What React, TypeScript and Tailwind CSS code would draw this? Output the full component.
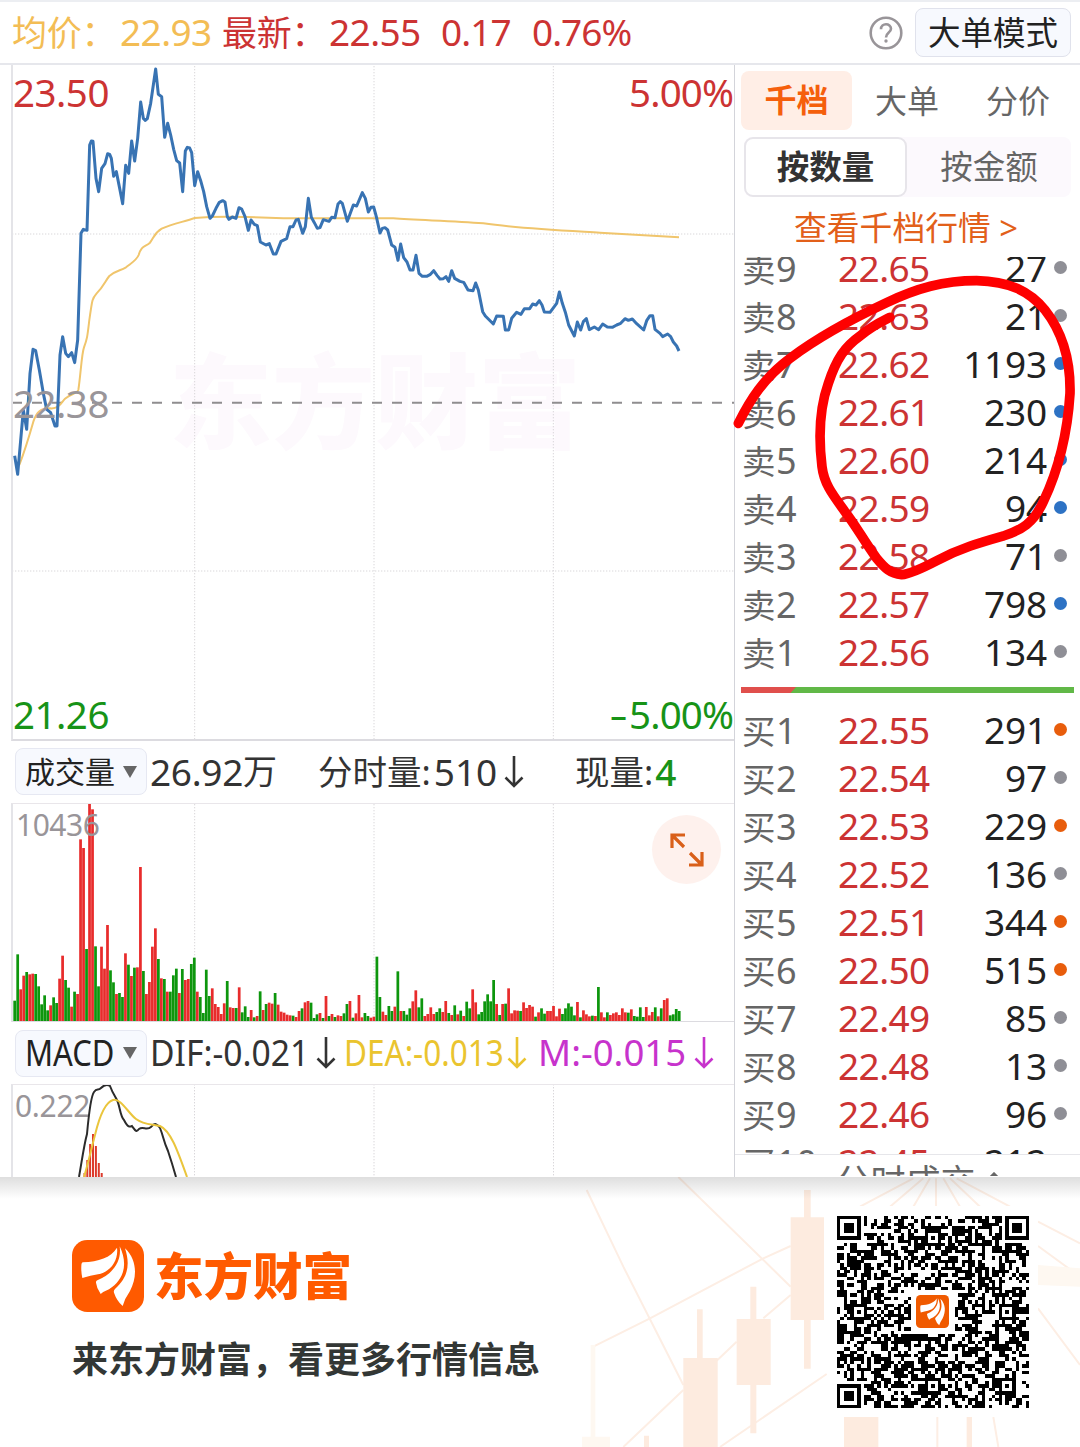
import * as React from "react"
import clsx from "clsx"

type Dot = "gray" | "blue" | "orange"
type Level = { label: string; price: string; qty: string; dot?: Dot }

const asks: Level[] = [
  { label: "卖9", price: "22.65", qty: "27", dot: "gray" },
  { label: "卖8", price: "22.63", qty: "21", dot: "gray" },
  { label: "卖7", price: "22.62", qty: "1193", dot: "blue" },
  { label: "卖6", price: "22.61", qty: "230", dot: "blue" },
  { label: "卖5", price: "22.60", qty: "214", dot: "blue" },
  { label: "卖4", price: "22.59", qty: "94", dot: "blue" },
  { label: "卖3", price: "22.58", qty: "71", dot: "gray" },
  { label: "卖2", price: "22.57", qty: "798", dot: "blue" },
  { label: "卖1", price: "22.56", qty: "134", dot: "gray" },
]

const bids: Level[] = [
  { label: "买1", price: "22.55", qty: "291", dot: "orange" },
  { label: "买2", price: "22.54", qty: "97", dot: "gray" },
  { label: "买3", price: "22.53", qty: "229", dot: "orange" },
  { label: "买4", price: "22.52", qty: "136", dot: "gray" },
  { label: "买5", price: "22.51", qty: "344", dot: "orange" },
  { label: "买6", price: "22.50", qty: "515", dot: "orange" },
  { label: "买7", price: "22.49", qty: "85", dot: "gray" },
  { label: "买8", price: "22.48", qty: "13", dot: "gray" },
  { label: "买9", price: "22.46", qty: "96", dot: "gray" },
  { label: "买10", price: "22.45", qty: "212" },
]

// One entry per minute: colour and height (a third of a pixel per unit)
const volume =
  "g61 g200 r95 r136 g147 r140 r142 g141 g104 g50 g77 g32 r47 g71 g54 r127 r196 g123 g100 r43 g88 r81 r545 r519 g216 r651 r635 g224 g104 r223 r157 r288 g152 g116 r81 g84 g72 r203 g169 r135 g160 r161 r462 g150 r81 r117 r223 r278 g186 r128 g126 r88 g88 g137 g157 r84 g156 r123 r126 g171 g190 r88 g72 g24 g154 g75 r98 r51 r42 r21 r53 g120 r41 r39 g39 r101 g26 g44 g12 r33 g11 r15 g89 r33 g51 r55 r52 g84 r49 r28 r25 r19 r17 g16 r12 r30 g38 r56 r60 g55 g9 g20 r24 g9 r75 g15 r21 g12 r17 r15 g23 g51 r60 g10 r23 r78 r11 g24 g15 r10 r13 " +
  "g193 g72 r28 r18 g45 g30 r43 g149 r30 g30 g19 g38 r59 r92 g41 g68 r15 r21 r41 r21 g27 g38 r27 r60 g24 r18 g47 r20 g31 r15 g58 g38 r95 r56 g20 g27 g59 g80 g59 g123 r51 g18 r51 g52 r98 r23 r32 r31 g30 r56 r39 r48 r43 g13 r26 g38 g22 r30 r30 r45 r14 r37 g21 g38 g53 g43 g17 r57 g11 r32 r20 r14 g16 r15 g102 r26 r11 g26 r18 r23 r26 r18 r38 r26 g25 r35 g15 g13 g41 g12 r42 r17 r27 g41 r14 g38 r63 r68 g17 g20 g36 g30"

const bars = volume.split(" ").map((v) => ({ up: v[0] === "r", h: Number(v.slice(1)) }))

const priceLine =
  "44,1187 53,1243 70,1050 80,1108 90,940 99,868 107,872 118,930 130,1000 140,1048 152,1058 165,1098 171,1098 180,885 188,830 197,880 205,890 215,878 224,908 233,840 243,520 250,508 261,511 269,255 274,243 279,244 288,355 296,395 305,325 315,311 323,281 329,283 334,295 341,349 349,335 359,385 368,431 377,316 386,340 395,243 404,303 413,235 422,126 430,175 436,181 442,176 452,130 467,27 475,103 485,110 494,232 503,190 512,225 521,268 530,302 539,309 548,395 556,273 562,262 569,264 575,278 584,377 593,335 602,362 611,395 620,440 630,475 637,468 648,445 658,427 668,422 675,426 682,470 687,478 697,471 708,475 717,443 725,447 735,470 745,511 753,480 763,493 772,497 781,546 798,555 808,551 820,582 828,582 843,544 860,536 870,500 879,500 888,480 895,478 908,520 916,500 925,415 934,472 943,488 952,505 960,503 970,479 987,484 995,472 1005,473 1014,432 1021,425 1027,430 1042,484 1060,435 1070,438 1087,398 1096,415 1105,456 1113,442 1121,441 " +
  "1129,470 1140,519 1147,505 1155,503 1163,510 1175,555 1185,562 1194,601 1202,552 1211,593 1221,606 1230,630 1239,630 1248,586 1257,640 1267,649 1280,649 1290,644 1301,632 1311,646 1320,657 1330,656 1338,650 1346,664 1355,632 1364,655 1380,664 1391,667 1404,690 1419,692 1427,669 1435,690 1448,755 1456,768 1480,792 1490,768 1510,769 1516,810 1526,810 1535,775 1550,757 1563,763 1573,746 1589,746 1598,732 1608,735 1618,722 1626,735 1633,756 1650,757 1670,730 1678,696 1687,730 1697,760 1706,795 1723,828 1732,786 1742,810 1750,785 1759,776 1768,809 1783,801 1796,809 1808,792 1822,801 1837,802 1850,795 1862,790 1875,776 1885,781 1897,777 1910,791 1931,810 1940,782 1950,767 1958,767 1965,808 1980,820 1988,830 2003,822 2012,830 2020,846 2030,858 2037,873"

const avgLine =
  "M58 1215C75 1170 90 1120 100 1085C110 1055 122 1045 150 1045C178 1048 185 1025 195 1016C215 1000 232 1000 235 990C242 945 245 880 252 862C262 835 262 830 268 780C277 715 277 715 290 700C312 678 315 664 328 648C350 630 360 633 378 622C400 605 410 600 416 585C425 555 435 562 450 548C465 525 465 518 485 506C520 490 555 485 584 474C650 468 700 470 740 471L850 475L1180 475C1250 481 1350 482 1450 490C1550 505 1700 512 1800 518L2037 532"

function pointsToPath(points: string) {
  return "M" + points.split(" ").join("L")
}

function BrandMark({ className, fill = "#ff5a00", radius = 46 }: { className?: string; fill?: string; radius?: number }) {
  return (
    <svg viewBox="0 0 216 216" className={className}>
      <rect width="216" height="216" rx={radius} fill={fill} />
      <g fill="#fff">
        <path d="M135 23C116 54 80 64 33 67Q28 68 28 78Q27 96 31 114Q56 106 78 103C116 96 140 60 135 23Z" />
        <path d="M143 19C150 68 118 104 76 121Q71 123 72 128Q74 145 86 162Q94 155 111 148C158 118 168 70 143 19Z" />
        <path d="M159 25C176 76 166 114 129 147Q124 152 126 158Q134 182 152 198Q158 176 174 153C196 112 196 60 159 25Z" />
      </g>
    </svg>
  )
}

const QR = 57

function buildQr() {
  const grid = Array.from({ length: QR }, () => new Array(QR).fill(false))
  let seed = 20931
  for (let y = 0; y < QR; y++) {
    for (let x = 0; x < QR; x++) {
      seed = (seed * 1103515245 + 12345) % 2147483648
      grid[y][x] = seed / 2147483648 < 0.52
    }
  }
  const ring = (cx: number, cy: number, r: number, isDark: (d: number) => boolean) => {
    for (let y = cy - r; y <= cy + r; y++) {
      for (let x = cx - r; x <= cx + r; x++) {
        if (x < 0 || y < 0 || x >= QR || y >= QR) continue
        grid[y][x] = isDark(Math.max(Math.abs(x - cx), Math.abs(y - cy)))
      }
    }
  }
  for (const [x, y] of [[28, 6], [6, 28], [50, 28], [28, 50], [50, 50]]) ring(x, y, 2, (d) => d !== 1)
  for (const [x, y] of [[3, 3], [53, 3], [3, 53]]) ring(x, y, 4, (d) => d < 2 || d === 3)
  // quiet zone for the logo
  ring(28, 28, 6, () => false)
  let d = ""
  grid.forEach((row, y) => row.forEach((on, x) => { if (on) d += `M${x} ${y}h1v1h-1z` }))
  return d
}

const qrPath = buildQr()

function QrCode() {
  return (
    <div className="relative flex h-[211px] w-[211px] items-center justify-center bg-white">
      <svg viewBox="0 0 57 57" className="h-48 w-48" shapeRendering="crispEdges">
        <path d={qrPath} fill="#000" />
      </svg>
      <BrandMark className="absolute top-[89px] left-[89px] h-[33px] w-[33px]" fill="#f05a00" radius={30} />
    </div>
  )
}

function TopBar() {
  return (
    <header className="flex h-[65px] shrink-0 items-center border-t-2 border-b-2 border-t-[#eceef2] border-b-[#e6e7ec] pr-[9px] pl-3 text-[37px] leading-[60px]">
      <div className="flex w-[210px] text-[#f3bd55]">
        <span className="w-[108px] text-[35px] tracking-[-0.2px]">均价：</span>
        <span className="-mt-px tracking-[-0.6px]">22.93</span>
      </div>
      <div className="flex text-[#cc3333]">
        <span className="w-[107px] text-[35px] tracking-[-0.2px]">最新：</span>
        <span className="-mt-px w-[112px] tracking-[-0.6px]">22.55</span>
        <span className="-mt-px w-[91px] tracking-[-0.9px]">0.17</span>
        <span className="-mt-px tracking-[-1px]">0.76%</span>
      </div>
      <div className="ml-auto flex items-center gap-3">
        <svg viewBox="0 0 34 34" className="h-[34px] w-[34px]" fill="none" stroke="#999599" strokeWidth="2.6">
          <circle cx="17" cy="17" r="15.3" />
          <path d="M12 13.2C12 6.6 22 6.8 22 12.8C22 16.6 17 16.4 17 21.4" />
          <circle cx="17" cy="25" r="1" fill="#999599" strokeWidth="1.4" />
        </svg>
        <button className="flex h-[49px] w-[156px] items-center justify-center rounded-lg border border-[#e0e2ec] bg-[#f7f9fe] text-[32.5px] text-[#222]">
          大单模式
        </button>
      </div>
    </header>
  )
}

function GridColumns({ height }: { height: number }) {
  return (
    <g stroke="#d9d7da" strokeWidth="3" strokeDasharray="4 5">
      <path d={`M584 0V${height}`} />
      <path d={`M1122 0V${height}`} />
      <path d={`M1660 0V${height}`} />
    </g>
  )
}

function PriceChart() {
  return (
    <div className="relative h-[676px] border-b-2 border-l-2 border-b-[#dcdbe0] border-l-[#e4e4e8] text-[38.5px] leading-[48px]">
      <div className="absolute top-[266px] left-[156px] text-[103px] leading-[140px] font-black text-[#fdf9fd]">东方财富</div>
      <svg viewBox="39 15 2163 2022" className="absolute inset-0 h-[674px] w-[721px]" fill="none">
        <GridColumns height={2040} />
        <path d="M36 522H2202M36 1533H2202" stroke="#d9d7da" strokeWidth="3" strokeDasharray="4 5" />
        <path d="M36 1028H2202" stroke="#8f8d8f" strokeWidth="6" strokeDasharray="30 30" />
        <path d={avgLine} stroke="#f0c56c" strokeWidth="6" />
        <path d={pointsToPath(priceLine)} stroke="#3873b3" strokeWidth="9" strokeLinejoin="round" />
      </svg>
      <span className="absolute top-[3px] left-0 tracking-[-0.5px] text-[#cc3333]">23.50</span>
      <span className="absolute top-[3px] right-[1px] tracking-[-0.9px] text-[#cc3333]">5.00%</span>
      <span className="absolute top-[314px] left-0 tracking-[-0.5px] text-[#999599]">22.38</span>
      <span className="absolute bottom-px left-0 tracking-[-0.5px] text-[#179317]">21.26</span>
      <span className="absolute right-[1px] bottom-px tracking-[-0.9px] text-[#179317]">
        <span className="mr-[3px] inline-block origin-right scale-x-[1.5]">-</span>5.00%
      </span>
    </div>
  )
}

function Down({ className }: { className?: string }) {
  return (
    <svg viewBox="0 0 20 34" className={clsx("h-[34px] w-5 shrink-0", className)} fill="none" stroke="currentColor" strokeWidth="2.6">
      <path d="M10 1V31M1.5 22.5L10 31L18.5 22.5" />
    </svg>
  )
}

function Picker({ children }: { children: React.ReactNode }) {
  return (
    <button className="ml-[4px] flex h-[47px] w-[132px] shrink-0 items-center rounded-lg border border-[#e6e8f2] bg-[#f7f9fe] pl-[9px] text-[30px] text-[#222]">
      {children}
      <svg viewBox="0 0 14 12" className="mr-[9px] ml-auto h-3 w-3.5">
        <path d="M0 0H14L7 12Z" fill="#666" />
      </svg>
    </button>
  )
}

function VolumePanel() {
  return (
    <>
      <div className="flex h-[62px] items-center pb-px text-[37px] text-[#333]">
        <Picker>成交量</Picker>
        <span className="ml-[3px] flex w-[168px] items-center tracking-[-0.3px]">
          26.92<span className="text-[34px]">万</span>
        </span>
        <span className="flex w-[257px] items-center">
          <span className="text-[34.5px]">分时量:</span>
          <span className="ml-[3px]">510</span>
          <Down className="ml-[7px]" />
        </span>
        <span className="text-[34.5px]">现量:</span>
        <span className="ml-[2px] font-medium text-[#179317]">4</span>
      </div>
      <div className="relative h-[219px] border-t border-b border-l-2 border-t-[#e9e6ea] border-b-[#dcdbe0] border-l-[#e4e4e8]">
        <svg viewBox="39 0 2163 651" className="absolute top-0 left-0 h-[217px] w-[721px]">
          <GridColumns height={651} />
          {bars.map((bar, i) => (
            <rect key={i} x={40 + i * 8.98} y={651 - bar.h} width="8.2" height={bar.h} fill={bar.up ? "#e82c2c" : "#0d960d"} />
          ))}
        </svg>
        <span className="absolute top-[1px] left-[3px] text-[30px] leading-10 tracking-[-0.5px] text-[#999599]">10436</span>
        <button className="absolute top-[11px] right-[13px] flex h-[69px] w-[69px] items-center justify-center rounded-full bg-[#fef1ed]">
          <svg viewBox="0 0 36 36" className="h-9 w-9" fill="none" stroke="#d9601a" strokeWidth="3.2">
            <path d="M16 3H3V16M3.5 3.5L15 15M20 33H33V20M32.5 32.5L21 21" />
          </svg>
        </button>
      </div>
    </>
  )
}

function MacdPanel() {
  return (
    <>
      <div className="flex h-[62px] items-center text-[36px] whitespace-nowrap">
        <Picker>
          <span className="w-[90px] origin-left scale-x-[0.86] text-[36px]">MACD</span>
        </Picker>
        <span className="ml-[3px] flex w-[194px] items-center text-[#333]">
          <span className="w-[166px] origin-left scale-x-[0.935]">DIF:-0.021</span>
          <Down />
        </span>
        <span className="flex w-[194px] items-center text-[#eac42f]">
          <span className="w-[163px] origin-left scale-x-[0.875]">DEA:-0.013</span>
          <Down />
        </span>
        <span className="flex items-center text-[#c733cc]">
          <span className="w-[156px] origin-left scale-x-[1.015]">M:-0.015</span>
          <Down />
        </span>
      </div>
      <div className="relative h-[93px] overflow-hidden border-t border-l-2 border-t-[#e9e6ea] border-l-[#e4e4e8]">
        <svg viewBox="13 1085 721 92" className="absolute top-0 left-0 h-[92px] w-[721px]" fill="none">
          <path d="M194.5 1084V1177M374 1084V1177M553.5 1084V1177" stroke="#d9d7da" strokeDasharray="1.4 1.6" />
          <path d="M84.5 1177V1173M87.3 1177V1160M90.1 1177V1144M93 1177V1134M95.9 1177V1146M98.8 1177V1163M101.7 1177V1173" stroke="#dc3a2c" strokeWidth="2" />
        </svg>
        <span className="absolute top-[1px] left-[2px] text-[30px] leading-10 tracking-[-0.3px] text-[#999599]">0.222</span>
        <svg viewBox="13 1085 721 92" className="absolute top-0 left-0 h-[92px] w-[721px]" fill="none" strokeWidth="2">
          <path d="M79 1177C82 1160 84 1145 87 1134C89 1112 91 1096 94 1092C97 1088 98 1091 101 1088C104 1085 107 1084 110 1086C113 1094 115 1096 117 1100C120 1106 120 1116 124 1120C128 1128 130 1127 132 1126C135 1130 136 1133 139 1129C143 1126 147 1131 151 1127C155 1122 157 1124 160 1128C164 1138 163 1140 168 1151C171 1160 174 1170 176 1177" stroke="#2b2b2b" />
          <path d="M84 1177C88 1164 91 1150 95 1135C100 1114 106 1102 113 1100C121 1098 128 1113 136 1119C144 1125 152 1124 160 1126C171 1131 178 1152 187 1177" stroke="#eac53c" />
        </svg>
      </div>
    </>
  )
}

function LevelRow({ level }: { level: Level }) {
  return (
    <div className="flex h-12 shrink-0 items-center pr-[7px] text-[37px] leading-[48px]">
      <span className="flex w-[97px] pl-px text-[#666]">
        <span className="w-[34px] text-[33.5px]">{level.label[0]}</span>
        <span className="text-[36px]">{level.label.slice(1)}</span>
      </span>
      <span className="-mt-[2px] tracking-[-0.6px] text-[#cc3333]">{level.price}</span>
      <span className="-mt-[2px] mr-[7px] ml-auto tracking-[-0.2px] text-[#222]">{level.qty}</span>
      <span
        className={clsx(
          "mt-[-4px] h-[13px] w-[13px] rounded-full",
          level.dot === "gray" && "bg-[#8f8f96]",
          level.dot === "blue" && "bg-[#2d72c4]",
          level.dot === "orange" && "bg-[#e85d0c]",
        )}
      />
    </div>
  )
}

function OrderBook() {
  return (
    <aside className="flex flex-1 flex-col border-l border-[#d3d4da] pt-[6px] pr-[6px] pl-[6px]">
      <div className="flex h-[59px] shrink-0 items-center text-[32px] text-[#666]">
        <button className="h-[59px] w-[111px] rounded-lg bg-[#ffeee6] pb-px font-bold text-[#f55f0c]">千档</button>
        <button className="w-[110px]">大单</button>
        <button className="w-[112px]">分价</button>
      </div>
      <div className="mt-[7px] ml-[3px] flex h-[60px] w-[327px] shrink-0 rounded-lg bg-[#fcf9fd] text-[32.5px] text-[#666]">
        <button className="w-[163px] rounded-[9px] border-2 border-[#e7e5ea] bg-white pt-px font-bold text-[#333]">按数量</button>
        <button className="flex-1 pt-px">按金额</button>
      </div>
      <a className="mt-[7px] block h-[53px] shrink-0 pl-[53px] text-[32.8px] leading-[48px] text-[#e2601a]">
        查看千档行情 &gt;
      </a>
      <div className="flex h-[420px] shrink-0 flex-col justify-end overflow-hidden">
        {asks.map((level) => (
          <LevelRow key={level.label} level={level} />
        ))}
      </div>
      <div className="mt-[10px] flex h-[6px] shrink-0 bg-[#61b847]">
        <div className="w-[55px] bg-[#e04f4c] [clip-path:polygon(0_0,100%_0,90%_100%,0_100%)]" />
      </div>
      <div className="mt-[14px] h-[447px] shrink-0 overflow-hidden">
        {bids.map((level) => (
          <LevelRow key={level.label} level={level} />
        ))}
      </div>
      <div className="-mr-[6px] -ml-[6px] flex h-[22px] items-start justify-center gap-2 overflow-hidden border-t border-[#e6e6ea] pl-[24px] text-[35px] leading-[54px] text-[#666]">
        <span>分时成交</span>
        <svg viewBox="0 0 20 12" className="mt-[17px] h-3 w-5" fill="none" stroke="#666" strokeWidth="3">
          <path d="M2 10L10 2L18 10" />
        </svg>
      </div>
    </aside>
  )
}

// Freehand stroke circling the sell orders
function Marker() {
  return (
    <svg viewBox="0 0 1050 1050" className="pointer-events-none absolute top-[240px] left-[730px] h-[350px] w-[350px]" fill="none">
      <path
        d="M25 550C60 480 100 415 180 355C260 295 380 230 470 188C560 145 640 122 740 122C840 124 900 155 945 210C1000 280 1022 370 1020 460C1012 590 985 690 940 785C910 850 875 870 820 888C750 908 690 925 620 962C570 988 540 1002 515 1004C480 1000 465 985 440 955C400 900 380 860 345 815C305 760 282 730 276 680C265 590 270 500 295 430C320 355 345 320 390 288C430 255 455 245 480 232"
        stroke="#fe0000"
        strokeWidth="29"
        strokeLinecap="round"
        strokeLinejoin="round"
      />
    </svg>
  )
}

function Backdrop() {
  return (
    <svg viewBox="0 21 1560 810" className="absolute top-0 right-0 h-[270px] w-[520px]" fill="none">
      <g stroke="#fdeee4" strokeWidth="6">
        <path d="M355 21L692 350M100 530L270 445L610 265L692 228M80 60L190 290L370 645M190 831L370 660M470 572L530 515M610 445L692 375M480 831L800 612M900 110L1060 25M990 110L1090 25M1060 110L1110 25M1128 110V25M1200 110L1150 25M1260 110L1170 25M1350 110L1190 25M1434 155L1560 220M1434 228L1560 320M1434 415L1560 585M1300 741L1315 831M1132 741V831" />
      </g>
      <g fill="#fdebdf">
        <path d="M732 60H752V142H792V450H752V596H732V450H692V142H732Z" />
        <path d="M571 350H589V447H632V645H589V790H571V645H530V447H571Z" />
        <path d="M411 418H428V564H473V831H370V564H411Z" />
        <path d="M852 741H955V831H852ZM252 797H267V831H252ZM1220 741H1236V831H1220Z" />
      </g>
      <path d="M92 525H106V800H150V831H66V800H92ZM1434 285L1560 295V350L1434 345Z" fill="#fef8f1" />
    </svg>
  )
}

function Footer() {
  return (
    <footer className="relative flex h-[270px] shrink-0 justify-between overflow-hidden bg-white pr-[42px] pl-[72px]">
      <Backdrop />
      <div className="absolute inset-x-0 top-0 h-[22px] bg-linear-to-b from-black/13 to-transparent" />
      <div className="relative pt-[63px]">
        <div className="flex h-[72px] items-center">
          <BrandMark className="h-[72px] w-[72px]" />
          <span className="ml-[10px] text-[49.5px] leading-[72px] font-black text-[#ff5a00]">东方财富</span>
        </div>
        <p className="mt-[23px] text-[36px] leading-[50px] font-bold text-[#333735]">来东方财富，看更多行情信息</p>
      </div>
      <div className="relative pt-[29px]">
        <QrCode />
      </div>
    </footer>
  )
}

export default function App() {
  return (
    <div className="relative flex h-[1447px] w-[1080px] flex-col overflow-hidden bg-white font-['Noto_Sans','Noto_Sans_CJK_SC',sans-serif]">
      <TopBar />
      <main className="flex h-[1112px] shrink-0 overflow-hidden">
        <section className="w-[734px] shrink-0 pl-[11px]">
          <PriceChart />
          <VolumePanel />
          <MacdPanel />
        </section>
        <OrderBook />
      </main>
      <Footer />
      <Marker />
    </div>
  )
}
